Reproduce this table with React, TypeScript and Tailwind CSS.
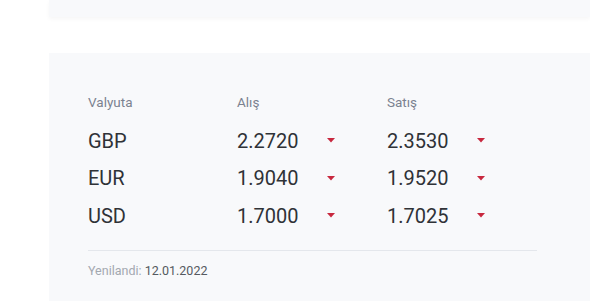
import React from "react";

const rows = [
  { c: "GBP", buy: "2.2720", sell: "2.3530" },
  { c: "EUR", buy: "1.9040", sell: "1.9520" },
  { c: "USD", buy: "1.7000", sell: "1.7025" },
];

function Arrow() {
  return (
    <svg width="8" height="5" viewBox="0 0 8 5" className="block">
      <path d="M0 0 L8 0 L4 4.5 Z" fill="#c8283e" />
    </svg>
  );
}

export default function App() {
  return (
    <div className="w-[590px] h-[301px] overflow-hidden bg-white" style={{ fontFamily: "Roboto, 'Noto Sans', sans-serif" }}>
      <div className="ml-[49px] h-[17px] bg-[#f8f9fb] shadow-[0_2px_4px_rgba(0,0,0,0.04)]" />
      <div className="ml-[49px] mt-[36px] h-[260px] bg-[#f8f9fb] pl-[39px] pt-[39px]">
        <div className="grid grid-cols-[149px_150px_150px] h-[20px] items-center text-[13.5px] text-[#7b8290]">
          <div>Valyuta</div>
          <div>Alış</div>
          <div>Satış</div>
        </div>
        <div className="mt-[10px]">
          {rows.map((r) => (
            <div key={r.c} className="grid grid-cols-[149px_150px_150px] h-[37.5px] items-center text-[20px] text-[#2f3237]">
              <div>{r.c}</div>
              <div className="flex items-center">
                <span className="w-[90px]">{r.buy}</span>
                <Arrow />
              </div>
              <div className="flex items-center">
                <span className="w-[90px]">{r.sell}</span>
                <Arrow />
              </div>
            </div>
          ))}
        </div>
        <div className="mt-[15.5px] w-[449px] h-px bg-[#e4e7ec]" />
        <div className="mt-[12px] text-[12.5px] leading-[16px]">
          <span className="text-[#a3a8b0]">Yenilandi: </span>
          <span className="text-[#555a60]">12.01.2022</span>
        </div>
      </div>
    </div>
  );
}
